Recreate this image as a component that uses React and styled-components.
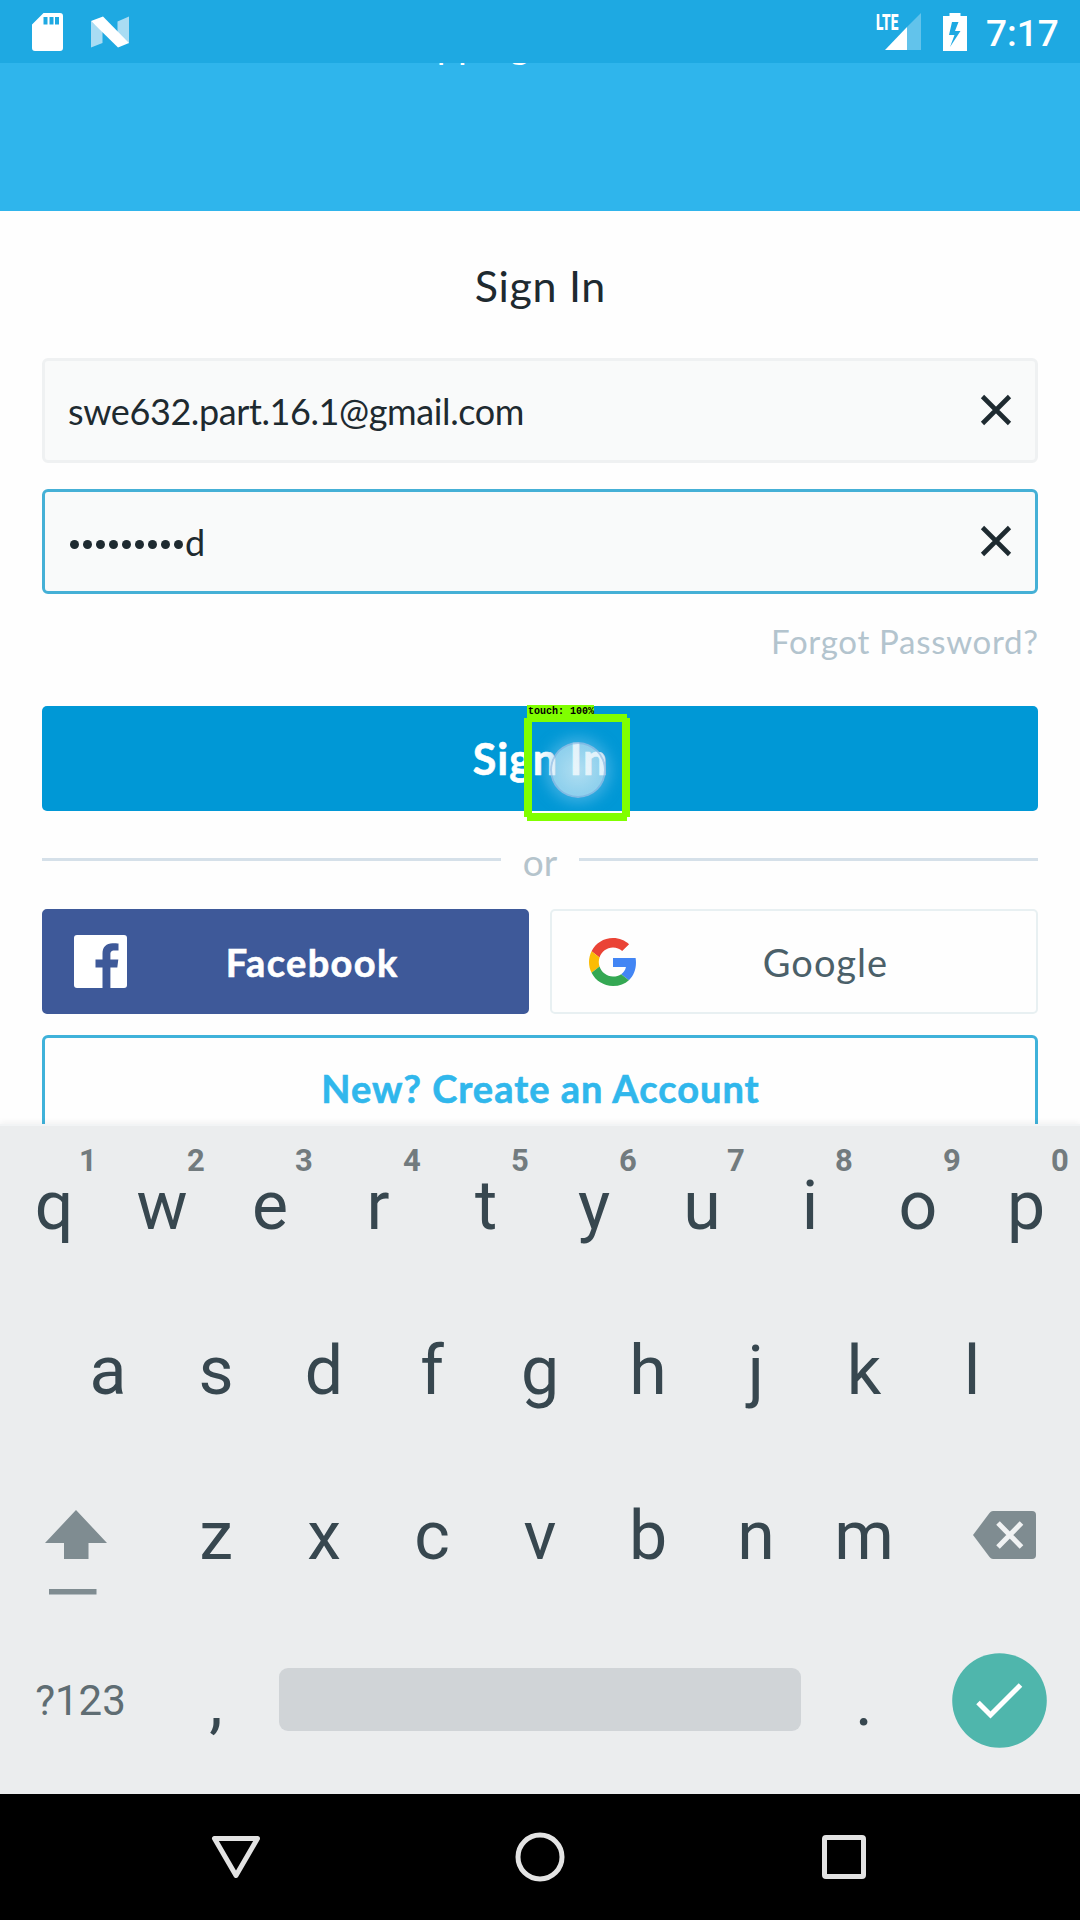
import React from "react";
import styled, { createGlobalStyle } from "styled-components";

const Global = createGlobalStyle`
  *, *::before, *::after { box-sizing: border-box; }
  body { margin: 0; background: #000; }
  svg { display: block; flex: none; }
`;

const Screen = styled.div`
  width: 1080px;
  height: 1920px;
  overflow: hidden;
  display: flex;
  flex-direction: column;
  background: #fefefe;
  font-family: Lato, "Open Sans", sans-serif;
  color: #1e2a30;
`;

const StatusBar = styled.header`
  height: 63px;
  flex: none;
  display: flex;
  align-items: center;
  padding: 0 21px 0 32px;
  background: #1ea9e2;
  color: #fff;
`;

const Notifications = styled.div`
  display: flex;
  gap: 28px;
  margin-right: auto;
`;

const Network = styled.div`
  display: flex;
  margin-right: 22px;
`;

const NetworkType = styled.span`
  width: 24px;
  margin-right: -15px;
  font: 900 22px/22px Roboto, sans-serif;
  transform: scaleX(0.62);
  transform-origin: 0 0;
  margin-top: -1px;
`;

const Clock = styled.time`
  margin-left: 19px;
  width: 73px;
  white-space: nowrap;
  font: 500 37px/42px Roboto, sans-serif;
  padding-top: 4px;
`;

const Hero = styled.div`
  height: 148px;
  flex: none;
  overflow: hidden;
  background: #2fb5ec;
`;

const Tagline = styled.p`
  margin: -43px 0 0;
  font-size: 38px;
  line-height: 46px;
  text-align: center;
  color: #fff;
`;

const Form = styled.main`
  height: 913px;
  flex: none;
  overflow: hidden;
  padding: 0 42px;
  display: flex;
  flex-direction: column;
`;

const Label = styled.span`
  white-space: nowrap;
  letter-spacing: ${(p) => p.$spacing || 0}px;
  margin-right: ${(p) => -(p.$spacing || 0)}px;
  -webkit-text-stroke: ${(p) => (p.$heavy ? 0.6 : 0)}px currentColor;
`;

const Title = styled.h1`
  margin: 0;
  height: 147px;
  padding-top: 2px;
  flex: none;
  display: flex;
  align-items: center;
  justify-content: center;
  font-size: 43px;
  font-weight: 400;
`;

const Field = styled.div`
  height: 105px;
  flex: none;
  display: flex;
  align-items: center;
  justify-content: space-between;
  padding: 0 23px 0 22px;
  margin-bottom: 26px;
  border: 3px solid ${(p) => (p.$focused ? "#45b0d6" : "#eff1f2")};
  border-radius: 6px;
  background: #f9fafa;
  font-size: 36px;
`;

const Value = styled.span`
  display: flex;
  align-items: center;
  padding: 1px 0 0 ${(p) => p.$indent || 0}px;
`;

const Masked = styled.span`
  display: flex;
  gap: 4px;
  padding: 5px 2px 0 3px;
`;

const Dot = styled.i`
  width: 9px;
  height: 9px;
  border-radius: 50%;
  background: #1e2a30;
`;

const Forgot = styled.a`
  align-self: flex-end;
  flex: none;
  margin-top: -1px;
  height: 87px;
  line-height: 44px;
  font-size: 33px;
  color: #b3c4ce;
`;

const Submit = styled.button`
  height: 105px;
  flex: none;
  border: 0;
  border-radius: 5px;
  display: flex;
  align-items: center;
  justify-content: center;
  background: #0098d6;
  color: #fff;
  font: 700 43px Lato, sans-serif;
  position: relative;
`;

const TouchBox = styled.div`
  position: absolute;
  left: 482px;
  top: 8px;
  width: 106px;
  height: 107px;
  border: 8px solid #80ff00;
  clip-path: polygon(3px 0, 103px 0, 103px 4px, 106px 4px, 106px 103px, 103px 103px, 103px 107px, 3px 107px, 3px 103px, 0 103px, 0 4px, 3px 4px);
`;

const TouchTag = styled.div`
  position: absolute;
  left: 485px;
  top: -1px;
  width: 67px;
  height: 12px;
  padding-left: 1px;
  background: #80ff00;
  color: #000;
  white-space: nowrap;
  text-align: left;
  font: 700 10px/14px "Liberation Mono", monospace;
`;

const TouchPoint = styled.div`
  position: absolute;
  left: 508px;
  top: 36px;
  width: 56px;
  height: 56px;
  border-radius: 50%;
  border: 2px solid rgba(110, 165, 220, 0.5);
  background: radial-gradient(circle, rgba(225, 242, 249, 0.78), rgba(212, 236, 248, 0.68) 65%, rgba(205, 232, 248, 0.75));
  box-shadow: 0 0 14px 5px rgba(120, 200, 240, 0.5);
`;

const Divider = styled.div`
  height: 98px;
  flex: none;
  display: flex;
  align-items: flex-start;
  justify-content: space-between;
  color: #b5c4cc;
  font-size: 37px;
  line-height: 42px;
  padding-top: 30px;
`;

const Rule = styled.span`
  width: 459px;
  height: 3px;
  margin-top: 17px;
  background: #d5e0e9;
`;

const Providers = styled.div`
  display: grid;
  grid-template-columns: 487px 488px;
  justify-content: space-between;
  height: 105px;
  flex: none;
  margin-bottom: 21px;
`;

const Provider = styled.button`
  display: flex;
  align-items: center;
  border-radius: 5px;
  border: 2px solid ${(p) => (p.$filled ? "#3e5999" : "#e8f0f2")};
  padding: 0 0 0 ${(p) => (p.$filled ? 30 : 37)}px;
  background: ${(p) => (p.$filled ? "#3e5999" : "#fefefe")};
  color: ${(p) => (p.$filled ? "#fff" : "#4b6069")};
  font: ${(p) => (p.$filled ? 700 : 400)} 38px Lato, sans-serif;
`;

const ProviderName = styled.span`
  flex: 1;
  padding-right: ${(p) => p.$inset}px;
  text-align: center;
`;

const CreateAccount = styled.button`
  height: 105px;
  flex: none;
  border: 3px solid #3fb2da;
  border-radius: 6px;
  background: #fefefe;
  display: flex;
  align-items: center;
  justify-content: center;
  color: #30b7ec;
  font: 700 38px Lato, sans-serif;
`;

const Keyboard = styled.section`
  height: 670px;
  flex: none;
  position: relative;
  border-top: 2px solid #f2f4f5;
  box-shadow: 0 -2px 6px rgba(0, 0, 0, 0.05);
  background: #ebedee;
  color: #37474f;
  font-family: Roboto, sans-serif;
`;

const KeyRow = styled.div`
  height: 165.3px;
  display: flex;
  align-items: center;
  justify-content: center;
`;

const Key = styled.div`
  width: ${(p) => p.$width || 108}px;
  height: 100%;
  flex: none;
  position: relative;
  display: flex;
  align-items: center;
  justify-content: center;
  padding-bottom: 6px;
  font-size: 68px;
  line-height: 80px;
`;

const Hint = styled.span`
  position: absolute;
  left: 74px;
  top: 17px;
  width: 28px;
  text-align: center;
  font-size: 31px;
  line-height: 36px;
  font-weight: 700;
  color: #727b7e;
`;

const SymbolsKey = styled(Key)`
  font-size: 42px;
  color: #5f6d73;
  padding: 0 1px 7px 0;
`;

const Space = styled.div`
  width: 522px;
  height: 63px;
  margin: 0 9px 10px;
  border-radius: 9px;
  background: #d0d4d7;
`;

const NavBar = styled.nav`
  flex: 1;
  display: flex;
  align-items: center;
  justify-content: center;
  gap: 254px;
  background: #000;
`;

const SdCard = () => (
  <svg width="31" height="38" viewBox="0 0 31 38">
    <path fill="#fff" fillRule="evenodd" d="M11.5 0H28a3 3 0 0 1 3 3v32a3 3 0 0 1-3 3H3a3 3 0 0 1-3-3V11.5zM11.5 4v7.5h4V4zm6 0v7.5h4V4zm5.500 0v7.500h4V4z" />
  </svg>
);

const Nougat = () => (
  <svg width="38" height="38" viewBox="0 0 38 38">
    <path fill="#a9dcf3" d="M0 8l11.500 10v12L0 34.500zM26.500 8.500L38 3.500v27l-11.500-11z" />
    <path fill="#fff" d="M0 8L12 3.500 38 30 27 34.500z" />
  </svg>
);

const Signal = () => (
  <svg width="36" height="37" viewBox="0 0 36 37">
    <path fill="#62c3eb" d="M36 0v37H22V14z" />
    <path fill="#fff" d="M22 14v23H0z" />
  </svg>
);

const Battery = () => (
  <svg width="24" height="38" viewBox="0 0 24 38">
    <path fill="#fff" fillRule="evenodd" d="M6.500 0h11v3H24v35H0V3h6.500zM9 9L6 22h5.500L7 34 17.500 18H12l3.500-9z" />
  </svg>
);

const ClearIcon = styled.svg`
  margin-bottom: 2px;
`;

const Clear = () => (
  <ClearIcon width="32" height="32" viewBox="0 0 32 32">
    <path d="M2.500 2.500l27 27m0-27l-27 27" stroke="#1e2a30" strokeWidth="4.600" />
  </ClearIcon>
);

const FacebookMark = () => (
  <svg width="53" height="53" viewBox="0 0 53 53">
    <rect width="53" height="53" rx="3" fill="#fff" />
    <path fill="#3e5999" d="M28.500 53V32.500h-7v-8h7v-6C28.500 12 32.500 8.300 38.500 8.300c2.500 0 4.800.100 6 .300V15.500h-4c-3.400 0-4.100 1.600-4.100 4v5h7.900l-1 8h-6.900V53z" />
  </svg>
);

const GoogleMark = () => (
  <svg width="47" height="48" viewBox="0 0 47 48">
    <path fill="#EA4335" d="M24 9.500c3.540 0 6.710 1.220 9.210 3.600l6.850-6.850C35.900 2.380 30.470 0 24 0 14.620 0 6.510 5.380 2.560 13.220l7.980 6.190C12.430 13.720 17.740 9.500 24 9.500z" />
    <path fill="#4285F4" d="M46.980 24.550c0-1.570-.150-3.090-.380-4.550H24v9.020h12.940c-.580 2.960-2.260 5.480-4.780 7.180l7.730 6c4.510-4.180 7.090-10.360 7.090-17.650z" />
    <path fill="#FBBC05" d="M10.530 28.590c-.480-1.450-.760-2.990-.760-4.590s.270-3.140.760-4.590l-7.980-6.190C.920 16.460 0 20.120 0 24c0 3.880.920 7.540 2.560 10.780l7.970-6.190z" />
    <path fill="#34A853" d="M24 48c6.480 0 11.930-2.130 15.890-5.810l-7.730-6c-2.150 1.450-4.920 2.300-8.160 2.300-6.260 0-11.570-4.220-13.470-9.910l-7.980 6.190C6.510 42.620 14.620 48 24 48z" />
  </svg>
);

const Shift = () => (
  <svg width="62" height="86" viewBox="0 0 62 86">
    <path fill="#7f8c91" d="M31 0l31 33H43.500v16H19V33H0zM4 79h47.500v5.500H4z" />
  </svg>
);

const Backspace = () => (
  <svg width="63" height="48" viewBox="0 0 63 48">
    <path fill="#7f8c91" d="M20 0h39a4 4 0 0 1 4 4v40a4 4 0 0 1-4 4H20q-2 0-3.500-2L0 24 16.500 2Q18 0 20 0z" />
    <path d="M25 12l23.500 24m0-24l-23.500 24" stroke="#f0f2f3" strokeWidth="5" />
  </svg>
);

const Done = () => (
  <svg width="95" height="95" viewBox="0 0 95 95">
    <circle cx="47.500" cy="47.500" r="47.300" fill="#4fb6ac" />
    <path d="M26 49.500l12.500 12.500L68.500 32" fill="none" stroke="#fff" strokeWidth="5" />
  </svg>
);

const ShiftKey = styled(Key)`
  width: 162px;
  justify-content: flex-start;
  padding: 27px 0 0 44.500px;
`;

const BackspaceKey = styled(Key)`
  width: 162px;
  padding: 0 0 8px 10px;
`;

const DoneKey = styled(Key)`
  width: 162px;
  padding: 0 0 9px 0;
`;

const topRow = [..."qwertyuiop"];
const homeRow = [..."asdfghjkl"];
const lowerRow = [..."zxcvbnm"];

export default function App() {
  return (
    <Screen>
      <Global />
      <StatusBar>
        <Notifications>
          <SdCard />
          <Nougat />
        </Notifications>
        <Network>
          <NetworkType>LTE</NetworkType>
          <Signal />
        </Network>
        <Battery />
        <Clock>7:17</Clock>
      </StatusBar>
      <Hero>
        <Tagline>Shopping Made Fun</Tagline>
      </Hero>
      <Form>
        <Title><Label $spacing={0.7}>Sign In</Label></Title>
        <Field>
          <Value $indent={1}><Label $spacing={-0.4}>swe632.part.16.1@gmail.com</Label></Value>
          <Clear />
        </Field>
        <Field $focused>
          <Value>
            <Masked>
              {Array.from({ length: 9 }, (_, i) => <Dot key={i} />)}
            </Masked>
            d
          </Value>
          <Clear />
        </Field>
        <Forgot><Label $spacing={0.7}>Forgot Password?</Label></Forgot>
        <Submit>
          <Label $heavy $spacing={1}>Sign In</Label>
          <TouchPoint />
          <TouchBox />
          <TouchTag>touch: 100%</TouchTag>
        </Submit>
        <Divider>
          <Rule />
          or
          <Rule />
        </Divider>
        <Providers>
          <Provider $filled>
            <FacebookMark />
            <ProviderName $inset={31}><Label $heavy $spacing={1.35}>Facebook</Label></ProviderName>
          </Provider>
          <Provider>
            <GoogleMark />
            <ProviderName $inset={22}><Label $spacing={1}>Google</Label></ProviderName>
          </Provider>
        </Providers>
        <CreateAccount><Label $heavy $spacing={1}>New? Create an Account</Label></CreateAccount>
      </Form>
      <Keyboard>
        <KeyRow>
          {topRow.map((k, i) => (
            <Key key={k}>{k}<Hint>{(i + 1) % 10}</Hint></Key>
          ))}
        </KeyRow>
        <KeyRow>
          {homeRow.map((k) => <Key key={k}>{k}</Key>)}
        </KeyRow>
        <KeyRow>
          <ShiftKey><Shift /></ShiftKey>
          {lowerRow.map((k) => <Key key={k}>{k}</Key>)}
          <BackspaceKey><Backspace /></BackspaceKey>
        </KeyRow>
        <KeyRow>
          <SymbolsKey $width={162}>?123</SymbolsKey>
          <Key>,</Key>
          <Space />
          <Key>.</Key>
          <DoneKey><Done /></DoneKey>
        </KeyRow>
      </Keyboard>
      <NavBar>
        <svg width="50" height="50" viewBox="0 0 50 50">
          <path d="M3.500 6.500h43L25 43.500z" fill="none" stroke="#e3e3e3" strokeWidth="5" strokeLinejoin="round" />
        </svg>
        <svg width="50" height="50" viewBox="0 0 50 50">
          <circle cx="25" cy="25" r="22" fill="none" stroke="#e3e3e3" strokeWidth="5" />
        </svg>
        <svg width="50" height="50" viewBox="0 0 50 50">
          <rect x="5.500" y="5.500" width="39" height="39" rx="1.500" fill="none" stroke="#e3e3e3" strokeWidth="5" />
        </svg>
      </NavBar>
    </Screen>
  );
}
